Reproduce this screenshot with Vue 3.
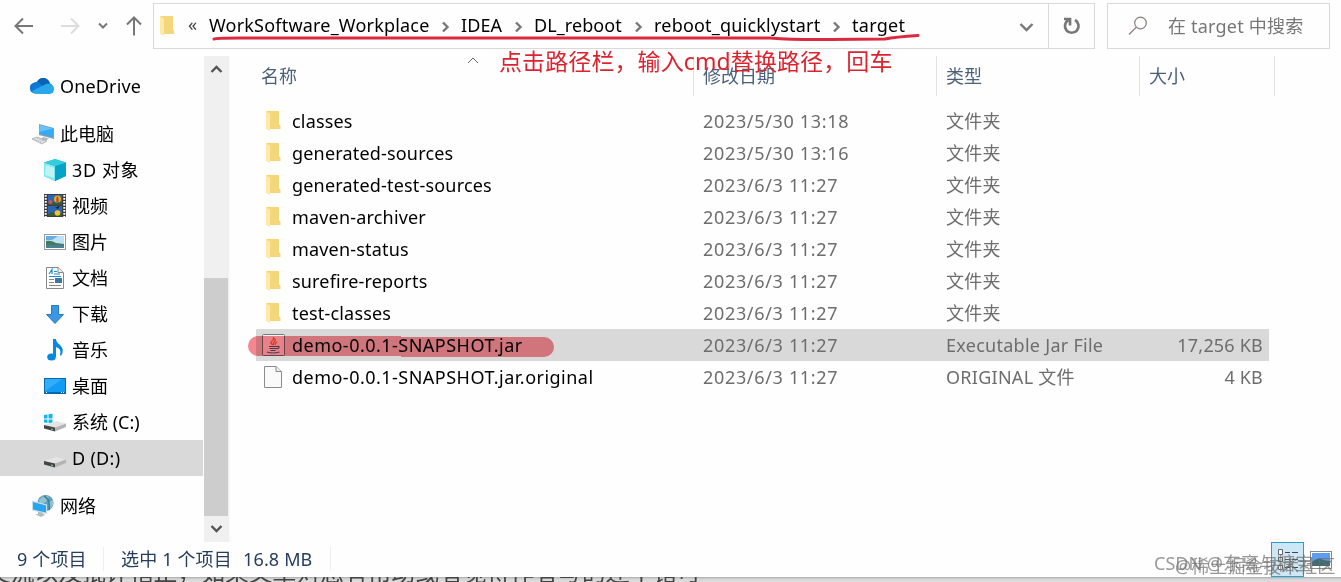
<script setup>
import { ref } from 'vue';

const crumbs = [
  { name: 'WorkSoftware_Workplace', cls: 'c1' },
  { name: 'IDEA', cls: 'c2' },
  { name: 'DL_reboot', cls: 'c3' },
  { name: 'reboot_quicklystart', cls: 'c4' },
  { name: 'target', cls: 'c5' }
];

const places = [
  { icon: 'cloud', name: 'OneDrive', root: true },
  { icon: 'pc', name: '此电脑', root: true, gap: true },
  { icon: 'cube', name: '3D 对象' },
  { icon: 'video', name: '视频' },
  { icon: 'picture', name: '图片' },
  { icon: 'doc', name: '文档' },
  { icon: 'download', name: '下载' },
  { icon: 'music', name: '音乐' },
  { icon: 'desktop', name: '桌面' },
  { icon: 'system', name: '系统 (C:)' },
  { icon: 'disk', name: 'D (D:)', active: true },
  { icon: 'network', name: '网络', root: true, gap: true }
];

const files = [
  { name: 'classes', date: '2023/5/30 13:18', type: '文件夹', icon: 'folder' },
  { name: 'generated-sources', date: '2023/5/30 13:16', type: '文件夹', icon: 'folder' },
  { name: 'generated-test-sources', date: '2023/6/3 11:27', type: '文件夹', icon: 'folder' },
  { name: 'maven-archiver', date: '2023/6/3 11:27', type: '文件夹', icon: 'folder' },
  { name: 'maven-status', date: '2023/6/3 11:27', type: '文件夹', icon: 'folder' },
  { name: 'surefire-reports', date: '2023/6/3 11:27', type: '文件夹', icon: 'folder' },
  { name: 'test-classes', date: '2023/6/3 11:27', type: '文件夹', icon: 'folder' },
  { name: 'demo-0.0.1-SNAPSHOT.jar', date: '2023/6/3 11:27', type: 'Executable Jar File', size: '17,256 KB', icon: 'jar' },
  { name: 'demo-0.0.1-SNAPSHOT.jar.original', date: '2023/6/3 11:27', type: 'ORIGINAL 文件', size: '4 KB', icon: 'file' }
];

const selected = ref(7);
</script>

<template>
  <div class="explorer">
    <header class="toolbar">
      <div class="nav">
        <svg width="20" height="18" viewBox="0 0 20 18" class="back"><path d="M19 9H2M9 1.5L1.5 9L9 16.500" /></svg>
        <svg width="20" height="18" viewBox="0 0 20 18" class="forward"><path d="M1 9H18M11 1.500L18.500 9L11 16.500" /></svg>
        <svg width="10" height="8" viewBox="0 0 10 8" class="recent"><path d="M1 1.500L5 5.500L9 1.500" /></svg>
        <svg width="16" height="20" viewBox="0 0 16 20" class="up"><path d="M8 19.500V2M1 8.500L8 1.500L15 8.500" /></svg>
      </div>
      <div class="address">
        <svg class="folder" width="16" height="22" viewBox="0 0 16 22">
          <path d="M1 1H14V14L15 16V19H1Z" fill="#f5d77b" />
          <path d="M1 1L5 4V21L1 19Z" fill="#fdeaa9" />
        </svg>
        <span class="more">«</span>
        <template v-for="(crumb, i) in crumbs" :key="crumb.name">
          <svg v-if="i" class="sep" width="9" height="12" viewBox="0 0 9 12"><path d="M2 1.500L6.500 6L2 10.500" /></svg>
          <span class="crumb" :class="crumb.cls">{{ crumb.name }}</span>
        </template>
        <svg class="drop" width="15" height="11" viewBox="0 0 15 11"><path d="M1.500 2L7.500 8L13.500 2" /></svg>
      </div>
      <button class="refresh">
        <svg width="18" height="18" viewBox="0 0 18 18">
          <path d="M12 3A6.800 6.800 0 1 1 5.500 3" />
          <path d="M1 2H7V8.500" />
        </svg>
      </button>
      <div class="search">
        <svg width="20" height="20" viewBox="0 0 20 20"><circle cx="12.500" cy="7" r="5.800" /><path d="M8.300 11.300L1 18.500" /></svg>
        <span>在 target 中搜索</span>
      </div>
    </header>

    <main class="content">
      <nav class="sidebar">
        <div v-for="place in places" :key="place.name" class="place" :class="[place.icon, { root: place.root, gap: place.gap, active: place.active }]">
          <svg width="24" height="24" viewBox="0 0 24 24">
            <g v-if="place.icon === 'cloud'">
              <path d="M5 19.500A5.500 5.500 0 0 1 3 9Q5 8 6.500 8Q9 4 13 4Q17.500 4 19.500 9Q24 11 23 16L18 20Z" fill="#0f78d4" />
              <path d="M8 8Q9 4 13 4Q18 4 20 9L13 12Z" fill="#0864b5" />
              <path d="M5 19.800L2 17L14 11Q17 9 20 10Q24 11 24 15Q24 20 19 20Z" fill="#29a7eb" />
            </g>
            <g v-else-if="place.icon === 'pc'">
              <path d="M8 2L23 6V17L8 13Z" fill="#8d9fac" />
              <path d="M8.500 3L22 6.500V15.500L8.500 12Z" fill="#38a9f2" />
              <path d="M8.500 3L22 6.500L8.500 10Z" fill="#64c3fb" />
              <path d="M12 15L18 16.500L14 19L10 17Z" fill="#aeb9c1" />
              <path d="M1 17L6 15L16 19L11 22Z" fill="#e0e4e6" stroke="#9ba5aa" stroke-width=".7" />
              <path d="M3.500 17.300L11 20.500M6 16L13.500 19.300" stroke="#919a9f" stroke-width=".8" stroke-dasharray="1 1" />
            </g>
            <g v-else-if="place.icon === 'cube'">
              <path d="M1 4.500L12 1L23 4.500V18L12 23L1 18Z" fill="#23b9d4" />
              <path d="M1 4.500L12 8V23L1 18Z" fill="#85e8ef" />
              <path d="M3 7L11 10V20L2 17Z" fill="#bdf5f4" />
              <path d="M12 8L23 4.500V18L12 23Z" fill="#06a3c8" />
              <path d="M1 4.500L12 1L23 4.500L12 8Z" fill="#35cddd" />
            </g>
            <g v-else-if="place.icon === 'video'">
              <rect x="1" y="0" width="22" height="23" fill="#3c3c3c" />
              <path d="M2.700 1V23M21.300 1V23" stroke="#fff" stroke-width="2" stroke-dasharray="1.700 1.300" />
              <path d="M5 1H19V11H5ZM5 12H19V22H5Z" fill="#2d65b4" />
              <path d="M5 9L9 7L12 9L19 8V11H5ZM5 20L10 18L13 20L19 19V22H5Z" fill="#3a5b2c" />
              <circle cx="14.500" cy="5" r="3.500" fill="#e0af21" />
              <path d="M14 2Q16 3 15.500 8H13.500Q13 4 14 2" fill="#c73d27" />
              <circle cx="14.500" cy="19" r="2.800" fill="#efc42a" />
              <circle cx="7.500" cy="8" r="2" fill="#cf5364" />
              <path d="M12 13.500L17 12L15 15Z" fill="#192e2d" />
            </g>
            <g v-else-if="place.icon === 'picture'">
              <rect x="1.500" y="4.500" width="21" height="15" fill="#fff" stroke="#939aa0" />
              <rect x="3" y="6" width="18" height="12" fill="#bce1f5" />
              <path d="M3 6H15L9 10H3Z" fill="#6aabe0" />
              <path d="M3 11Q8 10 13 13L21 14V16H3Z" fill="#467a5b" />
              <path d="M3 15H21V18H3Z" fill="#4c7f95" />
            </g>
            <g v-else-if="place.icon === 'doc'">
              <path d="M3.500 1.500H15L20.500 6.500V22.500H3.500Z" fill="#fff" stroke="#888" />
              <path d="M15 1.500V6.500H20" fill="#eee" stroke="#888" />
              <path d="M6 8L9 3.500V8M11 5.500H14M11 8H17M6 10.500H18" fill="none" stroke="#168bd2" stroke-width="1.200" />
              <path d="M6 13.500H11M6 16.500H11M6 19.500H18" stroke="#888" />
              <rect x="12" y="12" width="7" height="5" fill="#3976a7" />
            </g>
            <path v-else-if="place.icon === 'download'" d="M8.500 3.500H15.500V12.500H20.500L12 21.500L3.500 12.500H8.500Z" fill="#3997e4" stroke="#257abd" />
            <g v-else-if="place.icon === 'music'" fill="#058ae4">
              <ellipse cx="8.500" cy="19" rx="4.300" ry="3.500" />
              <path d="M10 1H13Q13 4 17 7Q22 12 18 18L17 17Q19 11 13 9V19H10Z" />
            </g>
            <g v-else-if="place.icon === 'desktop'">
              <rect x="1.500" y="4.500" width="21" height="15" fill="#149cf4" stroke="#096aad" />
              <path d="M2 17V5H19Z" fill="#32adfa" />
              <path d="M2 18.700H22" stroke="#075d98" />
              <path d="M3 18.500H4M18 18.500H19M20 18.500H21" stroke="#fff" />
            </g>
            <g v-else-if="place.icon === 'network'">
              <circle cx="14.500" cy="9" r="8" fill="#5e9fbb" />
              <path d="M8 6Q13 0 18 3L15 8L9 11ZM18 8L22 6Q23 12 19 15Z" fill="#93c3d1" />
              <path d="M13 2Q20 6 18 16" fill="none" stroke="#3d7f9f" stroke-width="1.500" />
              <path d="M1 6.500L16 10.500V20L1 16.500Z" fill="#c8dfec" />
              <path d="M2 8L15 11.500V18.500L2 15.500Z" fill="#29a4ef" />
              <path d="M7 17.500V20L4 20.500L10 23L14 21L11 18.500Z" fill="#b2bdc3" />
            </g>
            <g v-else>
              <path v-if="place.icon === 'system'" d="M1 5L4.500 4.500V8.500H1ZM5.500 4.300L9.500 3.800V8.500H5.500ZM1 9.500H4.500V13L1 12.500ZM5.500 9.500H9.500V13.500L5.500 13Z" fill="#13b6e8" />
              <path d="M1 15L13 11L23 13.500L12 17.500Z" fill="#e4e4e4" />
              <path d="M1 15L12 17.500V21.500L1 18.500Z" fill="#454545" />
              <path d="M12 17.500L23 13.500V17L12 21.500Z" fill="#b4b4b4" />
              <path d="M8 19L10 19.500" stroke="#7cdb8f" />
            </g>
          </svg>
          <span>{{ place.name }}</span>
        </div>
      </nav>
      <div class="scrollbar">
        <svg width="13" height="10" viewBox="0 0 13 10"><path d="M1.500 8L6.500 3L11.500 8" /></svg>
        <div class="thumb"></div>
        <svg width="13" height="10" viewBox="0 0 13 10"><path d="M1.500 2L6.500 7L11.500 2" /></svg>
      </div>

      <section class="list">
        <div class="head">
          <div class="name">名称<svg class="sort" width="12" height="7" viewBox="0 0 12 7"><path d="M1 6L6 1L11 6" /></svg></div>
          <div class="date">修改日期</div>
          <div class="type">类型</div>
          <div class="size">大小</div>
        </div>
        <div v-for="(file, i) in files" :key="file.name" class="row" :class="[file.icon + '-row', { selected: selected === i }]" @click="selected = i">
          <div class="name">
            <svg width="26" height="24" viewBox="0 0 26 24">
              <g v-if="file.icon === 'folder'">
                <path d="M6 2H19V15L20.500 17V20H6Z" fill="#f4d67b" />
                <path d="M6 2L10 5V22L6 20Z" fill="#fdeaa9" />
              </g>
              <g v-else-if="file.icon === 'jar'">
                <rect x="2.500" y="1.500" width="22" height="21" rx="1" fill="#f2f2f2" stroke="#777" />
                <path d="M13 12Q9.500 10 12 8Q14.500 6 13 4.500Q17 7 14 9Q13 10 13.500 12M15.500 12Q14.500 10.500 17 9" fill="none" stroke="#e8622d" stroke-width="1.300" />
                <path d="M9 13.500H17M9.500 15.500H16.500M10.500 17.500H15.500M17 13.500Q20.500 13 18.500 15L16.500 16M7 19Q13 21 19.500 19" fill="none" stroke="#496c8a" stroke-width="1.100" />
              </g>
              <g v-else>
                <path d="M4.500 1.500H16L21.500 6.500V22.500H4.500Z" fill="#fafafa" stroke="#8b8b8b" />
                <path d="M16 1.500V6.500H21.500" fill="#eee" stroke="#8b8b8b" />
              </g>
            </svg>
            <span>{{ file.name }}</span>
          </div>
          <div class="date">{{ file.date }}</div>
          <div class="type">{{ file.type }}</div>
          <div class="size">{{ file.size }}</div>
        </div>
      </section>
    </main>

    <footer class="status">
      <span class="total">9 个项目</span>
      <span class="picked">选中 1 个项目</span>
      <span class="bytes">16.8 MB</span>
      <div class="views">
        <div class="view on">
          <svg width="24" height="24" viewBox="0 0 24 24">
            <path d="M2.500 1.500H6.500V6.500H2.500ZM2.500 9.500H6.500V13.500H2.500ZM2.500 17.500H6.500V21.500H2.500Z" fill="#fff" stroke="#666" />
            <path d="M9 4.500H14M16 4.500H22M9 11.500H14M16 11.500H22M9 19.500H14M16 19.500H22" stroke="#444" />
          </svg>
        </div>
        <div class="view">
          <svg width="22" height="18" viewBox="0 0 22 18">
            <rect x=".5" y=".5" width="21" height="17" fill="#fff" stroke="#888" />
            <rect x="2" y="2" width="18" height="13" fill="#5d9df0" />
            <path d="M2 11Q9 5 13 9L20 10V15H2Z" fill="#426b70" />
          </svg>
        </div>
      </div>
    </footer>
    <div class="page-below"><span>交流以及批评指正，如果文章对您有帮助或者觉得作者写的还不错可</span></div>

    <!-- hand-drawn notes over the window -->
    <svg class="marks" width="1341" height="582" viewBox="0 0 1341 582">
      <path d="M214 39Q216 38 240 38L770 38Q795 40 830 39.500L885 39Q895 37 918 35.500" fill="none" stroke="#dc2a40" stroke-width="3" stroke-linecap="round" />
      <path d="M258 336H401V337H544A10 10 0 0 1 544 357H401V356H258A10 10 0 0 1 258 336Z" fill="#f48991" />
    </svg>
    <div class="note">点击路径栏，输入cmd替换路径，回车</div>
    <div class="mark csdn">CSDN @东离与糖宝</div>
    <div class="mark juejin">@稀土掘金技术社区</div>
  </div>
</template>

<style>
  body {
    margin: 0;
    overflow: hidden;
  }
</style>

<style scoped>
  .explorer {
    position: relative;
    display: flex;
    flex-direction: column;
    width: 1341px;
    height: 582px;
    overflow: hidden;
    background: #fefefe;
    color: #000;
    font: 18px/24px "Noto Sans", "Noto Sans CJK SC", sans-serif;
    white-space: nowrap;
  }

  svg {
    display: block;
    flex: none;
  }

  .toolbar {
    display: flex;
    height: 53px;
    padding-top: 3px;
    box-sizing: content-box;
  }

  .nav {
    display: flex;
    align-items: center;
    width: 153px;
    height: 46px;
  }

  .nav path {
    fill: none;
    stroke: #777;
    stroke-width: 2;
  }

  .back { margin-left: 14px; }
  .forward { margin-left: 26px; }
  .nav .forward path { stroke: #ddd; }
  .recent { margin-left: 18px; }
  .up { margin-left: 18px; }

  .address {
    display: flex;
    align-items: center;
    box-sizing: border-box;
    width: 896px;
    height: 46px;
    padding-left: 5px;
    border: 1px solid #d9d9d9;
  }

  .more {
    width: 25px;
    margin: -4px 0 0 13px;
    font-size: 18px;
    line-height: 20px;
    color: #444;
  }

  .folder { margin-bottom: 1px; }
  .crumb { margin-top: -2px; letter-spacing: .08px; }
  .c1 { margin-left: -4px; width: 221px; letter-spacing: .2px; }
  .c2 { width: 42px; }
  .c3 { width: 89px; }
  .c4 { width: 167px; letter-spacing: .2px; }
  .c5 { width: 54px; letter-spacing: .3px; }

  .sep {
    margin: 2px 11px 0 11px;
  }

  .sep path, .drop path {
    fill: none;
    stroke: #777;
    stroke-width: 2.4;
  }

  .drop {
    margin: 2px 14px 0 auto;
  }

  .refresh {
    display: flex;
    align-items: center;
    justify-content: center;
    width: 46px;
    height: 46px;
    box-sizing: border-box;
    padding: 0;
    border: 1px solid #d9d9d9;
    border-left: 0;
    background: none;
  }

  .refresh path {
    fill: none;
    stroke: #777;
    stroke-width: 2.7;
  }

  .search {
    display: flex;
    align-items: center;
    box-sizing: border-box;
    width: 223px;
    height: 46px;
    margin-left: 12px;
    padding-left: 20px;
    border: 1px solid #d9d9d9;
    color: #777;
    letter-spacing: .2px;
  }

  .search svg {
    margin-right: 20px;
    fill: none;
    stroke: #8b7d7d;
    stroke-width: 1.2;
  }

  .content {
    display: flex;
    height: 486px;
  }

  .sidebar {
    width: 204px;
    padding-top: 12px;
  }

  .place {
    display: flex;
    align-items: center;
    height: 36px;
    padding-left: 43px;
  }

  .place.root { padding-left: 31px; }
  .place.gap { margin-top: 12px; }
  .place.active { margin-right: 1px; background: #d9d9d9; }
  .place span { margin-left: 5px; }
  .place.cloud { letter-spacing: .15px; }
  .place.cloud svg { margin-left: -1px; margin-right: 1px; }
  .place.cube { letter-spacing: .6px; }
  .place.disk { letter-spacing: .3px; }

  .scrollbar {
    display: flex;
    flex-direction: column;
    align-items: center;
    box-sizing: border-box;
    width: 27px;
    background: #f0f0f0;
    border-right: 2px solid #fafafa;
  }

  .scrollbar svg {
    margin: 8px 0;
    fill: none;
    stroke: #555;
    stroke-width: 2.4;
  }

  .thumb {
    align-self: flex-start;
    width: 24px;
    height: 238px;
    margin-top: auto;
    background: #cdcdcd;
  }

  .list {
    width: 1050px;
  }

  .head, .row {
    display: flex;
    align-items: center;
  }

  .head {
    height: 40px;
    margin-bottom: 9px;
    color: #4c607a;
  }

  .head > div {
    box-sizing: border-box;
    height: 40px;
    line-height: 41px;
    border-right: 1px solid #e2e2e2;
  }

  .head .name { display: flex; width: 463px; padding-left: 30px; }
  .head .date { width: 243px; padding-left: 9px; }
  .head .type { width: 203px; padding-left: 9px; }
  .head .size { width: 135px; padding-left: 9px; }

  .sort {
    margin: 1px 0 0 170px;
    fill: none;
    stroke: #666;
  }

  .row {
    width: 1013px;
    height: 32px;
    margin-left: 25px;
    color: #6d6d6d;
  }

  .row.selected { background: #d9d9d9; }
  .row .name { display: flex; width: 447px; padding-left: 4px; box-sizing: border-box; color: #000; letter-spacing: .18px; }
  .jar-row .name, .file-row .name { letter-spacing: .48px; }
  .row .name span { margin-left: 6px; }
  .row .date { width: 243px; letter-spacing: .67px; }
  .row .type { width: 200px; letter-spacing: .27px; }
  .row .size { flex: 1; padding-right: 6px; text-align: right; letter-spacing: .2px; }

  .status {
    display: flex;
    align-items: center;
    height: 35px;
    padding-left: 17px;
    color: #263d5b;
    letter-spacing: .15px;
  }

  .status > span {
    margin-top: -2px;
  }

  .status .total { width: 86px; border-right: 1px solid #eee; }
  .status .picked { width: 122px; margin-left: 17px; }
  .status .bytes { width: 87px; border-right: 1px solid #eee; }

  .views {
    display: flex;
    align-items: center;
    margin-left: auto;
    padding-right: 4px;
  }

  .view {
    display: flex;
    align-items: center;
    justify-content: center;
    box-sizing: border-box;
    width: 33px;
    height: 35px;
  }

  .view.on {
    border: 1px solid #2f9dcc;
    background: #cce8f6;
  }

  .page-below {
    height: 5px;
    overflow: hidden;
    background: linear-gradient(#aaa, #d5d5d5 2px, #dedede);
    color: #444;
    font-size: 23.8px;
  }

  .page-below span {
    display: block;
    margin: -18px 0 0 -13px;
    line-height: 26px;
  }

  .marks {
    position: absolute;
    left: 0;
    top: 0;
    pointer-events: none;
    mix-blend-mode: multiply;
  }

  .note {
    position: absolute;
    left: 499px;
    top: 46px;
    color: #dc2430;
    font-size: 23px;
    line-height: 30px;
    letter-spacing: .1px;
  }

  .mark {
    position: absolute;
    color: rgba(110, 110, 110, .7);
  }

  .csdn { left: 1154px; top: 551px; }
  .juejin { left: 1175px; top: 554px; }
</style>
